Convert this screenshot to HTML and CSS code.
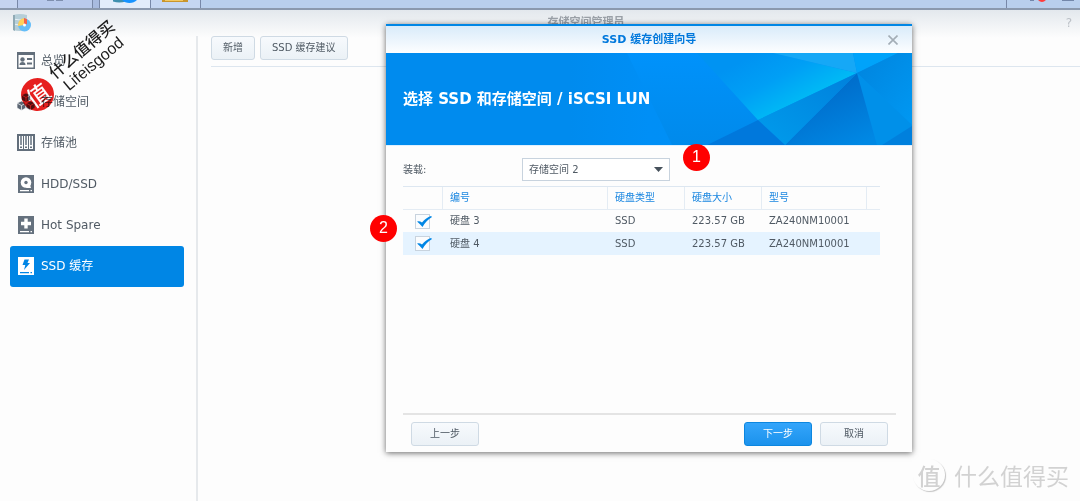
FILE: index.html
```html
<!DOCTYPE html>
<html lang="zh-CN">
<head>
<meta charset="utf-8">
<title>存储空间管理员</title>
<link rel="stylesheet" href="styles.css">
</head>
<body>
<div class="taskbar">
  <span class="task task-edge"></span>
  <span class="task task-menu"><svg width="16" height="2" viewBox="0 0 16 2"><path d="M0 0h7v1H0zM9 0h7v1H9z" fill="#7f8fae"/></svg></span>
  <span class="task task-gap"></span>
  <span class="task task-active"><svg width="24" height="4" viewBox="0 0 24 4"><path d="M0 0h13v1.500q-7 2-13 0z" fill="#3f8fae"/><path d="M9 0h15q-3 3-7.500 3T9 0z" fill="#1793ff"/></svg></span>
  <span class="task task-files"><svg width="27" height="4" viewBox="0 0 27 4"><path d="M0 0h26v2H0z" fill="#c9952c"/><path d="M3 0h18v1H3z" fill="#f3c860"/></svg></span>
  <span class="task task-rest"></span>
  <span class="task task-tray"><svg width="60" height="4" viewBox="0 0 60 4"><path d="M16 0h4v1h-4zM48 0h12v1H48z" fill="#7387aa"/><path d="M24 0h8q-4 4-8 0z" fill="#ff3b3b"/></svg></span>
</div>

<div class="app">
  <header class="app-header">
    <svg class="app-icon" width="20" height="20" viewBox="0 0 20 20">
      <path d="M1 2q7-2 14 0v15q-7 2-14 0z" fill="#b5ced8"/>
      <path d="M1 6q7 2 14 0M1 11q7 2 14 0" stroke="#e6f0f4" fill="none"/>
      <path d="M1 2v15l2 1V2z" fill="#8fa9b4"/>
      <circle cx="12.500" cy="12" r="6.500" fill="#64bdf8"/>
      <path d="M12 12V5a7 7 0 0 0-6 8z" fill="#ffd15c"/>
      <path d="M12 12V5l3 1v5z" fill="#f2644c"/>
      <circle cx="12.500" cy="12" r="1.500" fill="#fff"/>
    </svg>
    <h1 class="app-title">存储空间管理员</h1>
    <span class="help">?</span>
  </header>

  <div class="app-body">
    <nav class="sidebar">
      <a class="nav-item" href="#">
        <svg width="18" height="18" viewBox="0 0 18 18"><path fill="#626e7b" fill-rule="evenodd" d="M0 0h18v17H0zM1.500 3v12.500h15V3z"/><circle cx="5.500" cy="7.500" r="2.200" fill="#626e7b"/><path d="M2.500 13q0-3 3-3t3 3zM10 6h5v2h-5zM10 10.500h5v2h-5z" fill="#626e7b"/></svg>
        <span>总览</span>
      </a>
      <a class="nav-item" href="#">
        <svg width="18" height="18" viewBox="0 0 18 18"><g fill="#5b6673" stroke="#fff" stroke-width=".7" stroke-linejoin="round"><path d="M9 0l4.500 2v5L9 9.500 4.500 7V2z"/><path d="M4.500 8L9 10v5l-4.500 2.500L0 15v-5z"/><path d="M13.500 8l4.500 2v5l-4.500 2.500L9 15v-5z"/><path d="M4.500 2L9 4.500 13.500 2M9 4.500v5M0 10l4.500 2.500L9 10M4.500 12.500v5M9 10l4.500 2.500L18 10M13.500 12.500v5" fill="none"/></g></svg>
        <span>存储空间</span>
      </a>
      <a class="nav-item" href="#">
        <svg width="18" height="18" viewBox="0 0 18 18"><path fill="#626e7b" fill-rule="evenodd" d="M0 0h18v17H0zM2 2v13h4V2zM7 2v13h4V2zM12 2v13h4V2z"/><path d="M3 2h2v9H3zM8 2h2v9H8zM13 2h2v9h-2z" fill="#8a949e"/><path d="M3 12.500h2V14H3zM8 12.500h2V14H8zM13 12.500h2V14h-2z" fill="#626e7b"/></svg>
        <span>存储池</span>
      </a>
      <a class="nav-item" href="#">
        <svg width="18" height="18" viewBox="0 0 18 18"><path d="M1 0h16v18H1z" fill="#65717e"/><circle cx="9" cy="7.500" r="5.300" fill="#fff"/><circle cx="9" cy="7.500" r="1.700" fill="#65717e"/><path d="M12 7l2 6h-5z" fill="#fff"/><path d="M3 15h9v1.300H3zM13.500 15H15v1.300h-1.500z" fill="#fff"/></svg>
        <span>HDD/SSD</span>
      </a>
      <a class="nav-item" href="#">
        <svg width="18" height="18" viewBox="0 0 18 18"><path d="M1 0h16v18H1z" fill="#65717e"/><path d="M7.300 2.500h3.400v3.300H14v3.400h-3.300v3.300H7.300V9.200H4V5.800h3.300z" fill="#fff"/><path d="M3 15h9v1.300H3zM13.500 15H15v1.300h-1.500z" fill="#fff"/></svg>
        <span>Hot Spare</span>
      </a>
      <a class="nav-item selected" href="#" aria-current="page">
        <svg width="18" height="18" viewBox="0 0 18 18"><path d="M1 0h16v18H1z" fill="#fff"/><path d="M7.500 2.500H12L10.500 6H13l-6 7 1.300-5H5.500z" fill="#0086e5"/><path d="M3 15h9v1.300H3zM13.500 15H15v1.300h-1.500z" fill="#0086e5"/></svg>
        <span>SSD 缓存</span>
      </a>
    </nav>
    <main class="content">
      <div class="toolbar">
        <button class="btn" type="button">新增</button>
        <button class="btn" type="button">SSD 缓存建议</button>
      </div>
    </main>
  </div>
</div>

<section class="dialog" role="dialog" aria-labelledby="dialog-title">
  <header class="dialog-bar">
    <h2 class="dialog-title" id="dialog-title">SSD 缓存创建向导</h2>
    <button class="close" type="button" aria-label="关闭"><svg width="10" height="10" viewBox="0 0 10 10"><path d="M.5.500l9 9M9.500.500l-9 9" stroke="#a3adb6" stroke-width="1.600"/></svg></button>
  </header>
  <div class="banner">
    <svg class="banner-art" viewBox="0 0 526 92" preserveAspectRatio="none" aria-hidden="true">
      <defs>
        <linearGradient id="base" x1="0" x2="1"><stop offset="0" stop-color="#008bee"/><stop offset=".35" stop-color="#008bee"/><stop offset=".5" stop-color="#008ff6"/><stop offset="1" stop-color="#0091f0"/></linearGradient>
        <linearGradient id="left" x1="0" y1="0" x2="0" y2="1"><stop offset="0" stop-color="#0092fb"/><stop offset="1" stop-color="#008aeb"/></linearGradient>
        <linearGradient id="glow" gradientUnits="userSpaceOnUse" x1="370" y1="0" x2="400" y2="56"><stop offset="0" stop-color="#0093f2"/><stop offset=".5" stop-color="#009ff5"/><stop offset="1" stop-color="#00b9f5"/></linearGradient>
        <linearGradient id="strip" x1="0" y1="1" x2="1" y2="0"><stop offset="0" stop-color="#009cec"/><stop offset="1" stop-color="#0080dc"/></linearGradient>
        <linearGradient id="deep" x1=".4" y1=".3" x2=".8" y2="1"><stop offset="0" stop-color="#006fcd"/><stop offset="1" stop-color="#0088e4"/></linearGradient>
        <linearGradient id="right" x1="0" y1="0" x2="1" y2="1"><stop offset="0" stop-color="#0084de"/><stop offset="1" stop-color="#0098f2"/></linearGradient>
      </defs>
      <path d="M0 0h526v92H0z" fill="url(#base)"/>
      <path d="M241 0h70l61 67-51 25h-35z" fill="url(#left)"/>
      <path d="M311 0h76l84 20-99 47z" fill="url(#glow)"/>
      <path d="M387 0h80l4 20z" fill="#16a8f6"/>
      <path d="M467 0h45l-41 20z" fill="#00a3fa"/>
      <path d="M512 0h14v72l-55-52z" fill="url(#right)"/>
      <path d="M471 20l55 52v2l-30 18h-5z" fill="#0090e9"/>
      <path d="M471 20l20 72h-92z" fill="url(#deep)"/>
      <path d="M471 20l-72 72-27-25z" fill="url(#strip)"/>
      <path d="M372 67l27 25h-78z" fill="#0078dc"/>
      <path d="M526 73v19h-30z" fill="#0080dd"/>
    </svg>
    <h3 class="banner-title">选择 SSD 和存储空间 / iSCSI LUN</h3>
  </div>
  <div class="dialog-body">
    <div class="field">
      <label for="volume">装载:</label>
      <span class="select-wrap">
        <select id="volume"><option>存储空间 2</option></select>
        <svg class="arrow" width="9" height="5" viewBox="0 0 9 5"><path d="M0 0h9L4.500 5z" fill="#46515b"/></svg>
      </span>
    </div>
    <table class="disks">
      <colgroup><col class="c-check"><col class="c-id"><col class="c-type"><col class="c-size"><col class="c-model"><col></colgroup>
      <thead>
        <tr><th></th><th>编号</th><th>硬盘类型</th><th>硬盘大小</th><th>型号</th><th></th></tr>
      </thead>
      <tbody>
        <tr>
          <td><label class="check"><input type="checkbox" checked aria-label="硬盘 3"><svg width="15" height="11" viewBox="0 0 15 11"><path d="M0 5.500q2.500-1 5 1Q9 1.500 14 0l1 1Q9 4.500 5.500 11 3 8 0 5.500z" fill="#0086e5"/></svg></label></td>
          <td>硬盘 3</td><td>SSD</td><td>223.57 GB</td><td>ZA240NM10001</td><td></td>
        </tr>
        <tr class="alt">
          <td><label class="check"><input type="checkbox" checked aria-label="硬盘 4"><svg width="15" height="11" viewBox="0 0 15 11"><path d="M0 5.500q2.500-1 5 1Q9 1.500 14 0l1 1Q9 4.500 5.500 11 3 8 0 5.500z" fill="#0086e5"/></svg></label></td>
          <td>硬盘 4</td><td>SSD</td><td>223.57 GB</td><td>ZA240NM10001</td><td></td>
        </tr>
      </tbody>
    </table>
  </div>
  <footer class="dialog-footer">
    <button class="btn wide" type="button">上一步</button>
    <span class="spacer"></span>
    <button class="btn wide primary" type="button">下一步</button>
    <button class="btn wide" type="button">取消</button>
  </footer>
  <span class="pin pin-one">1</span>
  <span class="pin pin-two">2</span>
</section>

<div class="stamp-text"><span>什么值得买</span><span>Lifeisgood</span></div>
<div class="stamp-seal"><span>值</span></div>
<div class="watermark"><span class="watermark-seal">值</span><span>什么值得买</span></div>
</body>
</html>
```

FILE: styles.css
```css
* { box-sizing: border-box; }

body {
  margin: 0;
  min-height: 100vh;
  position: relative;
  display: flex;
  flex-direction: column;
  overflow: hidden;
  background: #fdfdfd;
  color: #505a64;
  font: 10px/16px "DejaVu Sans", "Noto Sans CJK SC", sans-serif;
}

h1, h2, h3 { margin: 0; }
button, select, input { font: inherit; color: inherit; }

/* Desktop task bar */
.taskbar {
  display: flex;
  height: 10px;
  border-bottom: 2px solid #8b99ae;
  background: #b9cfed;
}
.task {
  display: flex;
  justify-content: center;
  align-items: flex-start;
  border-right: 1px solid #7888a8;
}
.task-edge { width: 18px; background: #c5d4f0; }
.task-menu { width: 75px; background: #b9caec; }
.task-gap { width: 7px; background: #a8bbe0; }
.task-active { width: 51px; background: #e2ecfa; }
.task-files { width: 50px; background: #c5d6f2; }
.task-rest { flex: 1; }
.task-tray { width: 73px; border-right: 0; }

/* Application window */
.app {
  flex: 1;
  display: flex;
  flex-direction: column;
  background: linear-gradient(#e3e8ed, #fdfdfd 28px);
}
.app-header {
  display: grid;
  grid-template-columns: 1fr auto 1fr;
  align-items: center;
  height: 26px;
  padding: 0 8px 0 12px;
}
.app-title {
  margin-left: 88px;
  color: #9ba1a8;
  font-size: 11px;
  line-height: 16px;
}
.help { justify-self: end; color: #bcc1c7; font-size: 12px; }
.app-body { flex: 1; display: flex; }

.sidebar {
  width: 198px;
  padding: 5px 12px 0 10px;
  border-right: 2px solid #e6e9ec;
}
.nav-item {
  display: flex;
  align-items: center;
  gap: 6px;
  height: 41px;
  padding: 0 0 2px 7px;
  border-radius: 3px;
  color: #505a64;
  font-size: 12px;
  text-decoration: none;
}
.nav-item.selected { background: #0086e5; color: #fff; }

.content { flex: 1; padding-left: 13px; }
.toolbar {
  display: flex;
  gap: 5px;
  padding-bottom: 6px;
  border-bottom: 1px solid #dde6ef;
}

.btn {
  height: 24px;
  padding: 0 11px;
  border: 1px solid #cfdae4;
  border-radius: 3px;
  background: linear-gradient(#f7fafd, #ebf1f6);
  line-height: 16px;
}
.btn.wide { width: 68px; padding: 0; }
.btn.primary {
  border-color: #0c86df;
  background: linear-gradient(#34a5fb, #1b92ec);
  color: #fff;
}

/* Wizard dialog floating over the application */
.dialog {
  position: absolute;
  top: 24px;
  left: 386px;
  display: flex;
  flex-direction: column;
  width: 526px;
  min-height: 428px;
  border-top: 2px solid #0086e5;
  background: #fdfdfd;
  box-shadow: 0 1px 6px rgba(0, 0, 0, .6);
}
.dialog-bar {
  display: grid;
  grid-template-columns: 1fr auto 1fr;
  align-items: center;
  height: 27px;
  padding: 0 14px;
  background: linear-gradient(#d9ebfa, #fdfeff);
}
.dialog-title {
  grid-column: 2;
  color: #0078dc;
  font-size: 11px;
  line-height: 16px;
}
.close {
  display: flex;
  justify-self: end;
  padding: 0;
  border: 0;
  background: none;
}
.banner {
  position: relative;
  display: flex;
  align-items: center;
  height: 92px;
  padding: 0 17px;
}
.banner-art { position: absolute; inset: 0; width: 100%; height: 100%; }
.banner-title { position: relative; color: #fff; font-size: 15px; line-height: 24px; }

.dialog-body { flex: 1; padding: 12px 32px 0 17px; border-top: 1px solid #dff0ff; }
.field { display: flex; align-items: center; margin-bottom: 5px; }
.field label { width: 119px; }
.select-wrap { position: relative; display: flex; width: 148px; }
.select-wrap select {
  width: 100%;
  height: 23px;
  padding: 0 6px;
  border: 1px solid #c8d3de;
  border-radius: 0;
  background: #fff;
  appearance: none;
}
.arrow { position: absolute; top: 9px; right: 7px; pointer-events: none; }

.disks {
  width: 100%;
  border-top: 1px solid #dde7f1;
  border-collapse: separate;
  border-spacing: 0;
  table-layout: fixed;
}
.c-check { width: 40px; }
.c-id { width: 165px; }
.c-type { width: 77px; }
.c-size { width: 77px; }
.c-model { width: 105px; }
.disks th, .disks td {
  padding: 0 0 0 7px;
  text-align: left;
  font-weight: 400;
  white-space: nowrap;
}
.disks td { height: 22px; }
.disks th {
  height: 23px;
  border-right: 1px solid #e4ecf4;
  border-bottom: 1px solid #e4ecf4;
  color: #1a86e0;
}
.disks th:last-child { border-right: 0; }
.disks td:first-child { padding-left: 12px; }
.disks .alt td { height: 23px; background: #e5f3ff; }

.check { position: relative; display: block; width: 15px; height: 15px; }
.check input {
  display: block;
  width: 15px;
  height: 15px;
  margin: 0;
  border: 1px solid #c8d3de;
  background: #fafcfe;
  appearance: none;
}
.check svg { position: absolute; top: 2px; left: 2px; }

.dialog-footer {
  display: flex;
  gap: 8px;
  margin: 0 16px 0 17px;
  padding: 7px 8px 6px;
  border-top: 2px solid #e4e4e4;
}
.spacer { flex: 1; }

.pin {
  position: absolute;
  width: 27px;
  height: 27px;
  border-radius: 50%;
  background: #f00;
  color: #fff;
  font: 16px/26px "Liberation Sans", sans-serif;
  text-align: center;
}
.pin-one { top: 118px; left: 297px; }
.pin-two { top: 189px; left: -16px; }

/* Watermarks over the page */
.stamp-text {
  position: absolute;
  top: 39px;
  left: 42px;
  display: flex;
  flex-direction: column;
  align-items: center;
  width: 92px;
  color: #1c1c1c;
  font: 500 16px/18px "Liberation Sans", "Noto Sans CJK SC", sans-serif;
  transform: rotate(-40deg);
  pointer-events: none;
}
.stamp-seal {
  position: absolute;
  top: 78px;
  left: 21px;
  width: 33px;
  height: 33px;
  border-radius: 50%;
  background: #e8201f;
  color: #fff;
  font: 500 23px/32px "Noto Sans CJK SC", sans-serif;
  text-align: center;
  transform: rotate(-36deg);
  mix-blend-mode: multiply;
  pointer-events: none;
}
.watermark {
  position: absolute;
  right: 11px;
  bottom: 10px;
  display: flex;
  align-items: center;
  gap: 9px;
  color: #d2d2d2;
  font: 23px/32px "Noto Sans CJK SC", sans-serif;
  pointer-events: none;
}
.watermark-seal {
  width: 32px;
  height: 32px;
  border-radius: 50%;
  box-shadow: 1px 1px 1px #c4c4c4;
  font-weight: 500;
  text-align: center;
}
```
